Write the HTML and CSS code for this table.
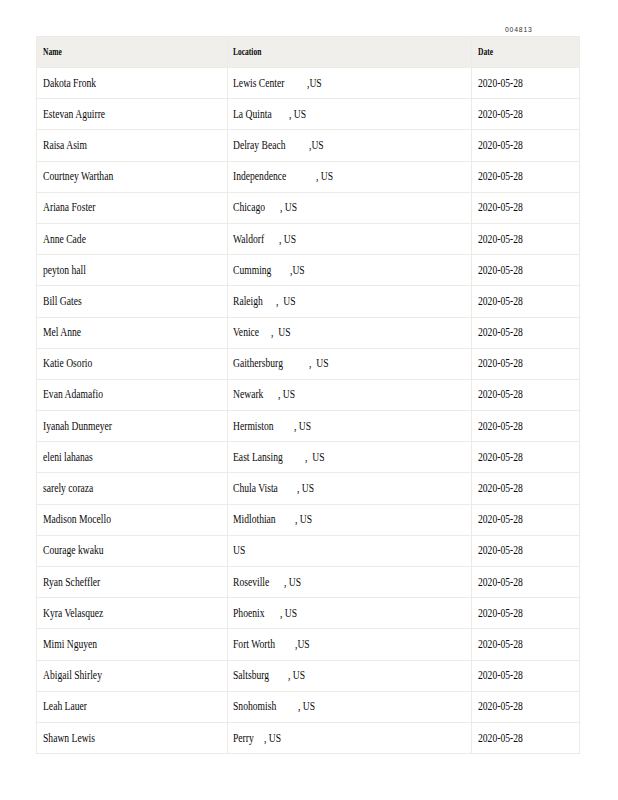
FILE: index.html
```html
<!DOCTYPE html>
<html>
<head>
<meta charset="utf-8">
<link rel="stylesheet" href="styles.css">
</head>
<body>
<div class="page">
  <div class="code-row"><span class="code">004813</span></div>
  <table class="grid">
    <thead>
      <tr><th class="c-name"><span class="h">Name</span></th><th class="c-loc"><span class="h">Location</span></th><th class="c-date"><span class="h">Date</span></th></tr>
    </thead>
    <tbody>
      <tr><td><span class="t">Dakota Fronk</span></td><td><span class="city" style="width:73px"><span class="t">Lewis Center</span></span><span class="t">,US</span></td><td><span class="t">2020-05-28</span></td></tr>
      <tr><td><span class="t">Estevan Aguirre</span></td><td><span class="city" style="width:55px"><span class="t">La Quinta</span></span><span class="t">, US</span></td><td><span class="t">2020-05-28</span></td></tr>
      <tr><td><span class="t">Raisa Asim</span></td><td><span class="city" style="width:75px"><span class="t">Delray Beach</span></span><span class="t">,US</span></td><td><span class="t">2020-05-28</span></td></tr>
      <tr><td><span class="t">Courtney Warthan</span></td><td><span class="city" style="width:82px"><span class="t">Independence</span></span><span class="t">, US</span></td><td><span class="t">2020-05-28</span></td></tr>
      <tr><td><span class="t">Ariana Foster</span></td><td><span class="city" style="width:46px"><span class="t">Chicago</span></span><span class="t">, US</span></td><td><span class="t">2020-05-28</span></td></tr>
      <tr><td><span class="t">Anne Cade</span></td><td><span class="city" style="width:45px"><span class="t">Waldorf</span></span><span class="t">, US</span></td><td><span class="t">2020-05-28</span></td></tr>
      <tr><td><span class="t">peyton hall</span></td><td><span class="city" style="width:56px"><span class="t">Cumming</span></span><span class="t">,US</span></td><td><span class="t">2020-05-28</span></td></tr>
      <tr><td><span class="t">Bill Gates</span></td><td><span class="city" style="width:42px"><span class="t">Raleigh</span></span><span class="t">,&nbsp; US</span></td><td><span class="t">2020-05-28</span></td></tr>
      <tr><td><span class="t">Mel Anne</span></td><td><span class="city" style="width:37px"><span class="t">Venice</span></span><span class="t">,&nbsp; US</span></td><td><span class="t">2020-05-28</span></td></tr>
      <tr><td><span class="t">Katie Osorio</span></td><td><span class="city" style="width:75px"><span class="t">Gaithersburg</span></span><span class="t">,&nbsp; US</span></td><td><span class="t">2020-05-28</span></td></tr>
      <tr><td><span class="t">Evan Adamafio</span></td><td><span class="city" style="width:44px"><span class="t">Newark</span></span><span class="t">, US</span></td><td><span class="t">2020-05-28</span></td></tr>
      <tr><td><span class="t">Iyanah Dunmeyer</span></td><td><span class="city" style="width:60px"><span class="t">Hermiston</span></span><span class="t">, US</span></td><td><span class="t">2020-05-28</span></td></tr>
      <tr><td><span class="t">eleni lahanas</span></td><td><span class="city" style="width:71px"><span class="t">East Lansing</span></span><span class="t">,&nbsp; US</span></td><td><span class="t">2020-05-28</span></td></tr>
      <tr><td><span class="t">sarely coraza</span></td><td><span class="city" style="width:63px"><span class="t">Chula Vista</span></span><span class="t">, US</span></td><td><span class="t">2020-05-28</span></td></tr>
      <tr><td><span class="t">Madison Mocello</span></td><td><span class="city" style="width:61px"><span class="t">Midlothian</span></span><span class="t">, US</span></td><td><span class="t">2020-05-28</span></td></tr>
      <tr><td><span class="t">Courage kwaku</span></td><td><span class="t">US</span></td><td><span class="t">2020-05-28</span></td></tr>
      <tr><td><span class="t">Ryan Scheffler</span></td><td><span class="city" style="width:50px"><span class="t">Roseville</span></span><span class="t">, US</span></td><td><span class="t">2020-05-28</span></td></tr>
      <tr><td><span class="t">Kyra Velasquez</span></td><td><span class="city" style="width:46px"><span class="t">Phoenix</span></span><span class="t">, US</span></td><td><span class="t">2020-05-28</span></td></tr>
      <tr><td><span class="t">Mimi Nguyen</span></td><td><span class="city" style="width:61px"><span class="t">Fort Worth</span></span><span class="t">,US</span></td><td><span class="t">2020-05-28</span></td></tr>
      <tr><td><span class="t">Abigail Shirley</span></td><td><span class="city" style="width:54px"><span class="t">Saltsburg</span></span><span class="t">, US</span></td><td><span class="t">2020-05-28</span></td></tr>
      <tr><td><span class="t">Leah Lauer</span></td><td><span class="city" style="width:64px"><span class="t">Snohomish</span></span><span class="t">, US</span></td><td><span class="t">2020-05-28</span></td></tr>
      <tr><td><span class="t">Shawn Lewis</span></td><td><span class="city" style="width:30px"><span class="t">Perry</span></span><span class="t">, US</span></td><td><span class="t">2020-05-28</span></td></tr>
    </tbody>
  </table>
</div>
</body>
</html>
```

FILE: styles.css
```css
html, body {
  margin: 0;
  padding: 0;
  background: #ffffff;
}

.page {
  padding: 0 38px 0 36px;
  font-family: "Liberation Serif", "Times New Roman", serif;
  color: #0a0a0a;
}

.code-row {
  display: flex;
  justify-content: flex-end;
  height: 36px;
  align-items: flex-end;
  padding-right: 47px;
  box-sizing: border-box;
  padding-bottom: 1px;
}

.code {
  font-family: "Liberation Sans", Arial, sans-serif;
  font-size: 8px;
  line-height: 10px;
  letter-spacing: 1px;
  color: #333333;
  display: inline-block;
  transform: scaleX(0.85);
  transform-origin: 100% 50%;
}

.grid {
  width: 544px;
  border-collapse: collapse;
  table-layout: fixed;
}

.grid th,
.grid td {
  box-sizing: border-box;
  border: 1px solid #ecebe6;
  text-align: left;
  vertical-align: middle;
  padding: 0 6px;
  white-space: nowrap;
  overflow: hidden;
}

.grid th:nth-child(2),
.grid td:nth-child(2) {
  padding-left: 5px;
}

.grid th {
  background: #f0efeb;
  height: 31px;
  font-size: 10px;
  font-weight: bold;
}

.grid td {
  height: 31.2px;
  font-size: 12px;
}

.c-name { width: 191px; }
.c-loc { width: 244px; }
.c-date { width: auto; }

.t,
.h {
  display: inline-block;
  transform-origin: 0 50%;
  line-height: 14px;
}

.t { transform: scaleX(0.8); }
.h { transform: scaleX(0.75); }

.city {
  display: inline-block;
  vertical-align: top;
  white-space: nowrap;
  margin-right: 1px;
}
```
